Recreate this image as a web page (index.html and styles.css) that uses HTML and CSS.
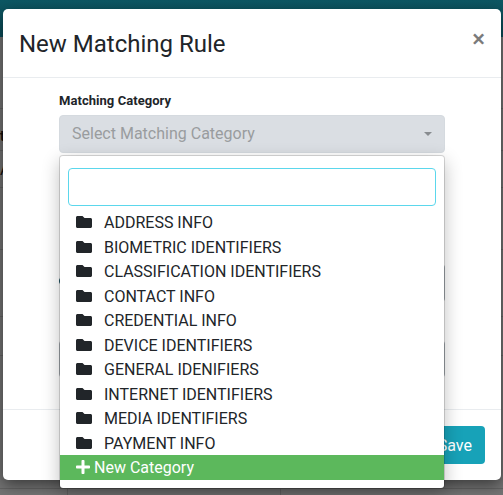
FILE: index.html
```html
<!DOCTYPE html>
<html lang="en">
<head>
<meta charset="utf-8">
<title>New Matching Rule</title>
<link rel="stylesheet" href="styles.css">
</head>
<body>
<svg class="sprite" aria-hidden="true">
  <symbol id="folder" viewBox="0 0 512 512"><path d="M464 128H272l-64-64H48C21.500 64 0 85.500 0 112v288c0 26.500 21.500 48 48 48h416c26.500 0 48-21.500 48-48V176c0-26.500-21.500-48-48-48z"/></symbol>
  <symbol id="plus" viewBox="0 0 448 512"><path d="M416 208H272V64c0-17.670-14.330-32-32-32h-32c-17.670 0-32 14.330-32 32v144H32c-17.670 0-32 14.330-32 32v32c0 17.670 14.330 32 32 32h144v144c0 17.670 14.330 32 32 32h32c17.670 0 32-14.330 32-32V304h144c17.670 0 32-14.330 32-32v-32c0-17.670-14.330-32-32-32z"/></symbol>
</svg>
<div class="page">
  <div class="topbar"></div>
  <div class="row row-a"></div>
  <div class="row row-b"><span>t</span></div>
  <div class="row row-c"><span>A</span></div>
  <div class="row row-d"></div>
  <div class="row row-e"></div>
  <div class="row row-f"></div>
  <div class="row row-g"></div>
  <div class="cells"><i></i><i></i></div>
</div>
<div class="modal">
  <header class="modal-header"><h1>New Matching Rule</h1><button class="close">×</button></header>
  <main class="modal-body">
    <label class="label">Matching Category</label>
    <div class="dropdown">
      <button class="select"><span>Select Matching Category</span><i class="caret"></i></button>
      <div class="menu">
        <input class="search" type="text">
        <ul class="options">
          <li><svg><use href="#folder"/></svg><span>ADDRESS INFO</span></li>
          <li><svg><use href="#folder"/></svg><span>BIOMETRIC IDENTIFIERS</span></li>
          <li><svg><use href="#folder"/></svg><span>CLASSIFICATION IDENTIFIERS</span></li>
          <li><svg><use href="#folder"/></svg><span>CONTACT INFO</span></li>
          <li><svg><use href="#folder"/></svg><span>CREDENTIAL INFO</span></li>
          <li><svg><use href="#folder"/></svg><span>DEVICE IDENTIFIERS</span></li>
          <li><svg><use href="#folder"/></svg><span>GENERAL IDENIFIERS</span></li>
          <li><svg><use href="#folder"/></svg><span>INTERNET IDENTIFIERS</span></li>
          <li><svg><use href="#folder"/></svg><span>MEDIA IDENTIFIERS</span></li>
          <li><svg><use href="#folder"/></svg><span>PAYMENT INFO</span></li>
          <li class="new"><svg><use href="#plus"/></svg><span>New Category</span></li>
        </ul>
      </div>
    </div>
    <div class="radio"></div>
    <div class="field field-one"></div>
    <div class="field field-two"></div>
  </main>
  <footer class="modal-footer"><button class="save">Save</button></footer>
</div>
</body>
</html>
```
FILE: styles.css
```css
* { box-sizing: border-box; }
body {
  margin: 0;
  width: 503px;
  height: 495px;
  overflow: hidden;
  position: relative;
  font: 16px/24.5px Roboto, "Liberation Sans", sans-serif;
  color: #212529;
}
button, input { font: inherit; }
.sprite { display: none; }
.page { height: 495px; background: #747474; color: #111; }
.topbar { height: 37px; background: linear-gradient(#0d5763, #0b4d59); }
.row { border-bottom: 1px solid #646464; font-size: 14px; overflow: hidden; }
.row-a { height: 72px; }
.row-b { height: 42px; padding-top: 15px; font-weight: 700; }
.row-c { height: 37px; padding-top: 7px; font-size: 16px; }
.row-d { height: 62px; }
.row-e { height: 67px; }
.row-f { height: 39px; }
.row-g { height: 133px; }
.cells { display: flex; height: 6px; }
.cells i { width: 68px; border-right: 1px solid #646464; }
.cells i + i { width: 213px; }
.modal {
  position: absolute;
  left: 3px;
  top: 9px;
  width: 498px;
  height: 471px;
  display: flex;
  flex-direction: column;
  background: #fff;
  border-radius: 5px;
  box-shadow: 0 5px 15px rgba(0, 0, 0, .5);
}
.modal-header {
  display: flex;
  justify-content: space-between;
  height: 69px;
  padding: 18px 16px 0 16px;
  border-bottom: 1px solid #e9ecef;
}
h1 { margin: 0; font-size: 24px; line-height: 34px; font-weight: 400; }
.close {
  height: 24px;
  padding: 0;
  border: 0;
  background: none;
  color: #7b7b7b;
  font-size: 24px;
  font-weight: 500;
  line-height: 22px;
}
.modal-body { height: 331px; padding: 13px 56px 0; }
.label { display: block; height: 24px; font-size: 13px; line-height: 20px; font-weight: 700; letter-spacing: .05px; }
.dropdown { position: relative; height: 38px; }
.select {
  display: flex;
  align-items: center;
  justify-content: space-between;
  width: 386px;
  height: 38px;
  padding: 0 12px;
  border: 1px solid #d5dadf;
  border-radius: 4px;
  background: #dadee3;
  color: #999c9e;
}
.caret { border: 4px solid transparent; border-top-color: #888c90; border-bottom: 0; }
.menu {
  position: absolute;
  z-index: 1;
  top: 40px;
  left: 0;
  width: 386px;
  height: 334px;
  padding: 12px 0 8px;
  border: 1px solid rgba(0, 0, 0, .15);
  border-radius: 4px;
  background: #fff;
  background-clip: padding-box;
  box-shadow: 0 6px 18px rgba(0, 0, 0, .24);
}
.search { display: block; width: 368px; height: 38px; margin: 0 8px 4px; border: 1px solid #5bd7ec; border-radius: 4px; background: #fff; outline: 0; }
.options { margin: 0; padding: 0; list-style: none; }
.options li { display: flex; align-items: center; height: 24.5px; padding-left: 16px; white-space: nowrap; }
.options span { padding-top: 2px; }
.options svg { width: 16px; height: 16px; margin-right: 12px; fill: currentColor; }
.options .new { height: 25px; background: #5cb85c; color: #fff; }
.options .new svg { width: 14px; margin: 0 4px 1px 0; }
.radio { width: 10px; height: 10px; margin: 123px 0 -23px; border-radius: 50%; background: #134e5e; }
.field { width: 386px; height: 38px; border: 1px solid #aab0b6; border-radius: 4px; background: #dadee3; }
.field-one { margin-top: 1px; border-left-color: transparent; background-clip: padding-box; }
.field-two { margin-top: 38px; }
.modal-footer { display: flex; justify-content: flex-end; padding: 16px; border-top: 1px solid #e9ecef; }
.save { width: 64px; height: 38px; padding: 2px 13px 0; border: 0; border-radius: 4px; background: #17a2b8; color: #fff; text-align: right; }
```
